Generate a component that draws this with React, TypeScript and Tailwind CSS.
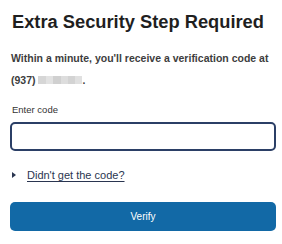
export default function App() {
  return (
    <div className="w-[282px] h-[244px] overflow-hidden bg-white font-['Liberation_Sans',Arial,sans-serif] px-[10px] pt-[11px]">
      <h1 className="text-[18.3px] leading-[22px] font-bold text-[#1f1f1f] pl-[2px] whitespace-nowrap">
        Extra Security Step Required
      </h1>
      <p className="mt-[14px] text-[10.5px] leading-[22px] font-bold text-[#3d3d3d] pl-px whitespace-nowrap">
        Within a minute, you'll receive a verification code at
        <br />
        (937){' '}
        <span className="inline-flex align-middle h-[8px] w-[44px] -mt-[2px]">
          <span className="w-[8px] bg-[#d6d6d6]" />
          <span className="w-[7px] bg-[#e2e2e2]" />
          <span className="w-[8px] bg-[#d0d0d0]" />
          <span className="w-[7px] bg-[#dddddd]" />
          <span className="w-[7px] bg-[#d3d3d3]" />
          <span className="w-[7px] bg-[#e0e0e0]" />
        </span>
        .
      </p>
      <label className="block mt-[12px] text-[9.5px] leading-[14px] text-[#333] pl-[2px]">Enter code</label>
      <input
        type="text"
        className="mt-[5px] block w-[266px] h-[29px] rounded-[5px] border-2 border-[#2b3f66] bg-white outline-none"
      />
      <div className="mt-[16px] flex items-center pl-[2px] text-[11px] leading-[16px]">
        <svg width="4" height="6" viewBox="0 0 4 6" className="shrink-0">
          <path d="M0 0 L4 3 L0 6 Z" fill="#2a3550" />
        </svg>
        <a href="#" className="text-[#2a3550] underline underline-offset-2 ml-[11px]">
          Didn't get the code?
        </a>
      </div>
      <button className="mt-[19px] block w-[266px] h-[29px] rounded-[5px] bg-[#1269a6] text-white text-[10px]">
        Verify
      </button>
    </div>
  );
}
